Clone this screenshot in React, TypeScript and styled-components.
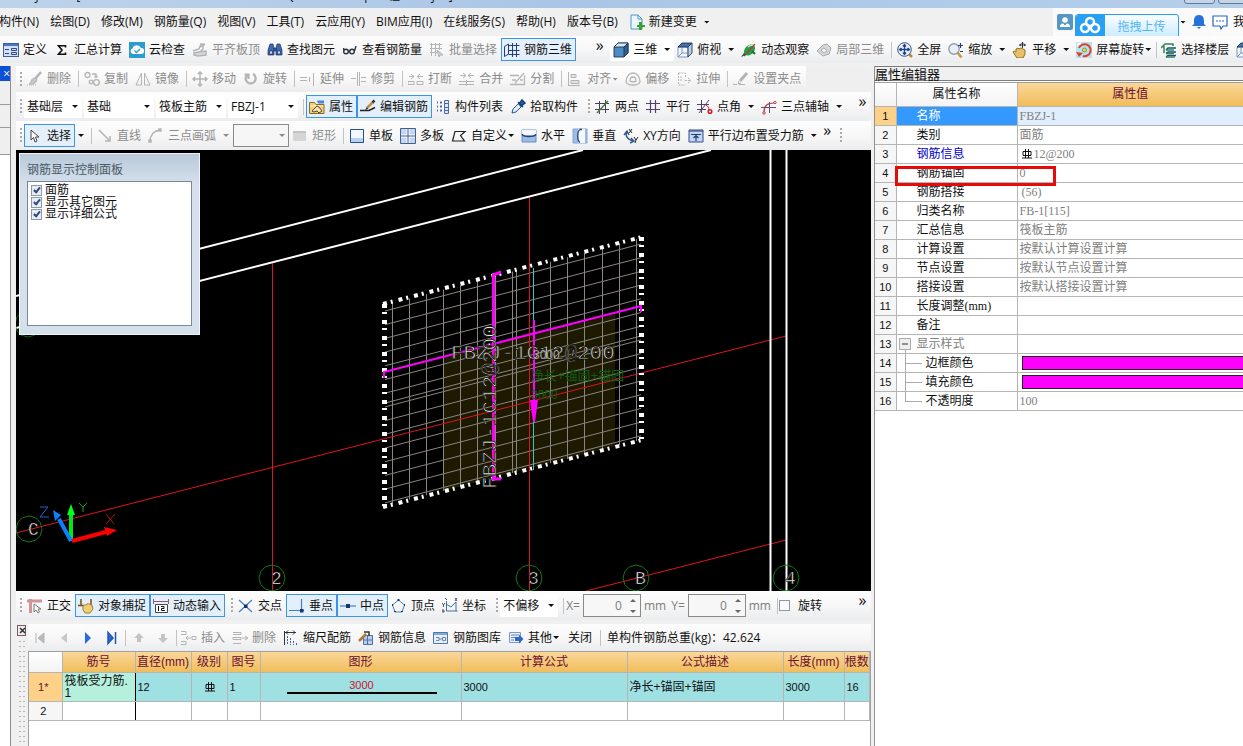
import React from "react";
import styled, { createGlobalStyle } from "styled-components";

const Global = createGlobalStyle`
  *, *::before, *::after { box-sizing: border-box; }
  html, body { margin: 0; padding: 0; }
  body {
    background: #f0f0f0;
    color: #111;
    font: 12px/16px "Open Sans", "Noto Sans CJK SC", sans-serif;
    overflow: hidden;
  }
  button, input, select { font: inherit; color: inherit; margin: 0; }
`;

/* ---------- icons ---------- */

const ink = "#2b4a86";
const gray = "#b4b4b4";

const icons: Record<string, React.ReactNode> = {
  define: (
    <g>
      <rect x="0.5" y="1.5" width="15" height="13" fill="#d3e0f5" stroke="#3d5f9f" />
      <rect x="1" y="2" width="14" height="2" fill="#4a76c8" />
      <path d="M2 7.500h4M2 11.500h4M8.500 6.500h5v2h-5zM8.500 10.500h5v2h-5z" fill="none" stroke={ink} />
    </g>
  ),
  sum: <path d="M11.500 5.500V3.800H4.500l3.500 4.200-3.500 4.200h7V10.500" fill="none" stroke="#111" strokeWidth="1.600" />,
  cloud: (
    <g>
      <rect width="16" height="16" fill="#2b9bd0" />
      <path d="M4 12a3 3 0 0 1-.4-5.800A4.500 4.500 0 0 1 12 6a3 3 0 0 1 .3 6z" fill="#fff" />
      <path d="M5.500 8.500l2 2 3.500-3.500" fill="none" stroke="#2b9bd0" strokeWidth="1.300" />
    </g>
  ),
  slabTop: (
    <g fill="none" stroke={gray} strokeWidth="1.500">
      <path d="M1 9l6-2 2-5h2v5l-3 3" />
      <path d="M2 11l5-1 7-1v4l-8 1-4-1z" fill="#d8d8d8" />
      <path d="M8 5l5-3" />
    </g>
  ),
  find: (
    <g fill="#3f66b0" stroke="#1d3566" strokeWidth=".7">
      <path d="M3 2h3l1 4v7H1V8zM13 2h-3L9 6v7h6V8z" />
      <path d="M7 6h2v3H7z" />
      <path d="M2.500 9h3v3h-3zM10.500 9h3v3h-3z" fill="#c9dcf7" />
    </g>
  ),
  glasses: (
    <g fill="none" stroke="#2c3340" strokeWidth="1.400">
      <circle cx="4" cy="9.500" r="2.300" />
      <circle cx="10" cy="9.500" r="2.300" />
      <path d="M6.500 9h1M2 8.500L1.500 6M12.500 9L14 4" />
    </g>
  ),
  batch: (
    <g fill="none" stroke={gray}>
      <path d="M1 2.500h12M1 6.500h12M1 10.500h7M2.500 1v13M6.500 1v13M10.500 1v7" />
      <path d="M8 8l6 5-3 0-1 2z" fill="#ccc" />
    </g>
  ),
  rebar3d: (
    <g fill="none" stroke="#24406f">
      <path d="M.5 14.500V4.500l4-2.500v10zM4.500 3.500h11M4.500 8.500h11M4.500 12.500h11M8.500 1v14M12.500 1v14" />
    </g>
  ),
  cube: (
    <g stroke="#1f3350" strokeWidth=".9">
      <path d="M1 5l4-4h10v10l-4 4H1z" fill="#4e8cc4" />
      <path d="M1 5l4-4h10l-4 4z" fill="#d4e8f8" />
      <path d="M11 5l4-4v10l-4 4z" fill="#2f618f" />
    </g>
  ),
  topView: (
    <g stroke="#1f3350" strokeWidth=".9">
      <path d="M1 5h10v10H1z" fill="#f2f7fd" stroke="#6b8fc0" />
      <path d="M1 5l4-4h10l-4 4z" fill="#3f71ad" />
      <path d="M11 5l4-4v10l-4 4z" fill="#b9d0ea" />
      <path d="M5 5v6h6M5 11l-4 4" fill="none" stroke="#6b8fc0" />
    </g>
  ),
  orbit: (
    <g>
      <ellipse cx="8.500" cy="8" rx="6.500" ry="4.500" transform="rotate(-45 8.500 8)" fill="#23a04a" />
      <path d="M7 5c2-2 4-2 5-1" stroke="#b7efc5" fill="none" strokeWidth="1.500" />
      <path d="M3 14L14 2" stroke="#c03a30" strokeWidth="1.200" />
      <path d="M0 15l3-4 2 2z" fill="#2a5d3b" />
      <path d="M11 9l3 3" stroke="#1b6b32" strokeWidth="2" />
    </g>
  ),
  part3d: (
    <g fill="#d6d6d6" stroke="#aaa">
      <path d="M1 9l6-6 4-1 4 4-2 6-6 2z" />
      <path d="M5 8l3-2 3 3-3 2z" fill="#f4f4f4" />
    </g>
  ),
  fit: (
    <g>
      <path d="M12 12l3 3" stroke="#b68a3a" strokeWidth="2.500" />
      <circle cx="7.500" cy="7.500" r="6.800" fill="#e8f1fb" stroke="#3a5788" />
      <path d="M7.500 3v9M3 7.500h9M6 4.500l1.500-2 1.500 2M6 10.500l1.500 2 1.500-2M4.500 6l-2 1.500 2 1.500M10.500 6l2 1.500-2 1.500" fill="none" stroke="#1d4485" strokeWidth="1.300" />
    </g>
  ),
  zoom: (
    <g>
      <path d="M9.500 10.500l4 5" stroke="#c79a3d" strokeWidth="2.500" />
      <circle cx="6" cy="7" r="5.200" fill="#e6f0fa" stroke="#8f9aab" strokeWidth="1.400" />
      <path d="M12.500 1v5M10 3.500h5M12 9.500h3" stroke="#24406f" strokeWidth="1.200" />
    </g>
  ),
  pan: (
    <g>
      <path d="M1 10c1-2 2 0 3 0V7l2-1 1 1 2-1 2 1 2 1v4l-2 4H5z" fill="#e8c06a" stroke="#946d23" />
      <path d="M10.500 0v6M7.500 3h6M9.500 1.500l1-1.200 1 1.200M9 2L7.500 3 9 4M12 2l1.500 1L12 4" fill="none" stroke="#333" />
    </g>
  ),
  rotateView: (
    <g>
      <path d="M0 0h16v16H0z" fill="#b9e1ee" />
      <path d="M3 6a6 6 0 1 1 4 8" fill="none" stroke="#e0402f" strokeWidth="2" />
      <path d="M0 10l3 5 4-4z" fill="#e0402f" />
      <circle cx="8.500" cy="8" r="2" fill="#ead86d" stroke="#6d9d43" />
      <path d="M1 3l4-2" stroke="#fff" strokeWidth="2" />
    </g>
  ),
  floors: (
    <g fill="none" stroke="#1e4c83" strokeWidth="1.500">
      <path d="M5 8l2-2h8M5 11.500l2-1.500h8M5 15l2-1.500h8" />
      <path d="M5 8h8M5 11.500h8M5 15h9" stroke="#2f8452" />
      <path d="M0 6l4-4h8v2M3 4v7" stroke="#2f8452" />
    </g>
  ),
  brush: (
    <g fill="none" stroke={gray}>
      <path d="M14 1L8 8" strokeWidth="2.500" />
      <path d="M8 7l2 2c-1 3-4 5-8 4 2-1 2-2 2-3 1-2 2-3 4-3z" fill="#c6c6c6" />
      <path d="M0 14h10" strokeDasharray="1 1" />
    </g>
  ),
  copy: (
    <g fill="none" stroke={gray} strokeWidth="1.300">
      <circle cx="3.500" cy="4" r="2.500" />
      <circle cx="7" cy="11" r="1.800" />
      <circle cx="12.500" cy="11.500" r="2.800" />
      <path d="M8 3h4v3M10.500 5l1.500 1.500L13.500 5" />
    </g>
  ),
  mirror: <path d="M6.500 2v12H1zM9.500 2v12H15z" fill="none" stroke={gray} />,
  move: (
    <path d="M8 1v14M1 8h14M6 3l2-2 2 2M6 13l2 2 2-2M3 6L1 8l2 2M13 6l2 2-2 2" fill="none" stroke={gray} strokeWidth="1.500" />
  ),
  rotate: <path d="M4 4a5 5 0 1 0 6-1M1.500 3.500H5.500V8" fill="none" stroke={gray} strokeWidth="2.200" />,
  extend: <path d="M0 6.500h7M0 9.500h7M9.500 6v5M13.500 2v13" fill="none" stroke={gray} strokeDasharray="none" />,
  trim: <path d="M0 7.500h5M10 6.500h5M6.500 1v14M8.500 1v14M10 10.500h5" fill="none" stroke={gray} />,
  split: <path d="M1 5.500h5M9 5.500h6M3 3l3 2.500L3 8M12 3L9 5.500 12 8M0 10.500h6v3H0zM9 10.500h6v3H9z" fill="none" stroke={gray} />,
  merge: <path d="M1 4.500h5M9 4.500h6M4 2l3 2.500L4 7M12 2L9 4.500 12 7M0 10.500h15M0 13.500h15M7.500 9v6" fill="none" stroke={gray} />,
  cut: <path d="M0 4.500h9M0 13.500h14.500v-9M14 2L5 12M2 9h4M10 9h3" fill="none" stroke={gray} strokeWidth="1.300" />,
  align: <path d="M1.500 1v14M1 14.500h12M4 3.500h5v3H4zM4 9.500h8v3H4z" fill="#e3e3e3" stroke={gray} />,
  offset: (
    <g fill="none" stroke={gray} strokeWidth="1.300">
      <path d="M1 11c0-5 3-9 7-9s7 4 7 9c-2 4-12 4-14 0z" />
      <path d="M5 10c0-3 1-4 3-4s3 1 3 4c-1 1-5 1-6 0z" />
    </g>
  ),
  stretch: <path d="M2.500 2h7v5M2.500 2v12h7M5 5v6M9 9.500h6M12 7l3 2.500-3 2.500" fill="none" stroke={gray} strokeDasharray="2 1" />,
  grip: (
    <g fill="none" stroke={gray}>
      <path d="M14 2L7 10" strokeWidth="3" />
      <path d="M0 13.500h4M6 13.500h6M6 10l-1 3 3-1" />
    </g>
  ),
  props: (
    <g>
      <path d="M.5 3.500h5l1.500 2h8v9H.5z" fill="#f3cf78" stroke="#8a6a28" />
      <path d="M1 7h13" stroke="#fff1c8" />
      <path d="M3 12l5-5 2 1 3 4-3 2-2-2-3 1z" fill="#f8e2a4" stroke="#4a4a4a" />
      <path d="M8 1.500h7v3H9z" fill="#4a88cf" />
    </g>
  ),
  editRebar: (
    <g fill="none">
      <path d="M0 11.500h9l6-3" stroke="#222" strokeWidth="1.500" />
      <path d="M13 3L7 9" stroke="#c78a45" strokeWidth="2.500" />
      <path d="M14.500 1.500l-2 2" stroke="#333" strokeWidth="2.500" />
      <path d="M7 8l-2 3 3-1" fill="#222" />
    </g>
  ),
  list: (
    <g fill="none" stroke="#4d6aa5">
      <path d="M9.500 1.500h4v13h-4zM10 4.500h3M10 8.500h3M10 11.500h3" fill="#dbe6f6" />
      <path d="M2 3.500h1M2 7.500h1M2 11.500h1M5 3.500h2M5 7.500h2M5 11.500h2" strokeWidth="2" />
    </g>
  ),
  picker: (
    <g>
      <path d="M2 14l1-4 6-6 3 3-6 6z" fill="#d9ecfb" stroke="#31578e" />
      <path d="M8 3l5 5M9 5l3-4 3 3-4 3z" fill="#1f65b8" stroke="#1b3e75" strokeWidth="1.500" />
    </g>
  ),
  twoPoint: (
    <g fill="none" stroke="#4b3c63">
      <path d="M0 4.500h14M0 10.500h14M4.500 2v13M10.500 1v13" />
      <path d="M2 14L13 2" stroke="#4c7a2f" strokeWidth="1.500" />
    </g>
  ),
  parallel: (
    <path d="M0 4.500h14M0 10.500h14M4.500 1v13M9.500 1v13" fill="none" stroke="#54406e" strokeWidth="1.200" />
  ),
  pointAngle: (
    <g fill="none" stroke="#54406e">
      <path d="M0 5.500h12M0 10.500h9M4.500 1v13M2 14L12 1" />
      <path d="M9 6c2 1 3 3 3 5" stroke="#d02020" />
      <circle cx="13" cy="12.500" r="1.800" stroke="#d02020" strokeWidth="1.500" />
    </g>
  ),
  threeAxis: (
    <g fill="none" stroke="#c03a48">
      <path d="M3 13c0-6 3-9 10-9" strokeWidth="1.200" />
      <path d="M0 8.500h15M8.500 3v11" stroke="#57506e" />
      <circle cx="14" cy="3.500" r="1.200" />
      <circle cx="3" cy="14" r="1.200" />
    </g>
  ),
  cursor: <path d="M4 2v10l2.500-2.500L8 14l2-1-1.500-4H12z" fill="#fff" stroke="#444" />,
  line: <path d="M2 2l10 10M13 8v5H8" fill="none" stroke={gray} strokeWidth="1.500" />,
  arc: <path d="M2 14C2 7 5 3 12 2M1 12h2v2H1zM11 1h2v2h-2z" fill="none" stroke={gray} strokeWidth="1.400" />,
  rect: (
    <g>
      <path d="M1 3h13v10H1z" fill="#d5d5d5" />
      <path d="M1 3h13v2H1z" fill="#c4c4c4" />
    </g>
  ),
  single: (
    <g>
      <path d="M1.500 1.500h13v13h-13z" fill="#f3f8ff" stroke="#284c91" />
      <path d="M2 10h12v4H2z" fill="#b8d2f4" />
    </g>
  ),
  multi: (
    <g>
      <path d="M.5.5h15v15H.5z" fill="#c3d6f0" stroke="#41608f" />
      <path d="M8 1v14M1 8h14" stroke="#fff" strokeWidth="3" />
      <path d="M8 1v14M1 8h14" stroke="#41608f" />
    </g>
  ),
  custom: <path d="M4 3.500h10L9.500 7.500l4 5.500H1.500z" fill="none" stroke="#222" strokeWidth="1.200" />,
  horizontal: (
    <g>
      <path d="M1 2h14v12H1z" fill="#9dbbe5" stroke="#6c8bc0" />
      <path d="M1 2h14v5H1z" fill="#f4f9ff" />
      <path d="M1.500 6v1c2 2 11 2 13 0V6" fill="none" stroke="#24406f" strokeWidth="1.300" />
    </g>
  ),
  vertical: (
    <g>
      <path d="M1 1h14v14H1z" fill="#9dbbe5" stroke="#8aa6d0" />
      <path d="M6 1h7v14H6z" fill="#f4f9ff" />
      <path d="M10 1.500H8C5 3 5 13 8 14.500" fill="none" stroke="#24406f" strokeWidth="1.300" />
    </g>
  ),
  xy: (
    <g fill="none" stroke="#32578f" strokeWidth="1.400">
      <path d="M4 4c-2 4 0 7 6 9M1 7l3-4 2 4M8 10l3 3-4 2" />
      <path d="M6 1l3 4M9 1L6 5M11 9l2 3 2-3M13 12l-1 3" stroke="#222" strokeWidth="1" />
    </g>
  ),
  edgeForce: (
    <g>
      <path d="M1 2h14v12H1z" fill="#c2d6f2" stroke="#2e4f88" />
      <path d="M1 3h14M3 6.500h10M8 7v6M5.500 10L8 7.500l2.500 2.500" fill="none" stroke="#24406f" strokeWidth="1.200" />
    </g>
  ),
  ortho: (
    <g>
      <path d="M0 3h15M3.500 1v14" stroke="#d19499" strokeWidth="3" />
      <path d="M7 6v8l2-2 2 3 1.500-1-1.500-3h3z" fill="#fff" stroke="#777" />
    </g>
  ),
  snap: (
    <g>
      <path d="M0 7.500h6M3 1v7M13 1v6" stroke="#7a4c22" strokeWidth="1.500" />
      <path d="M5 8c2-2 3 0 4-2 2-1 3 1 5 1l1 4-3 4H7l-2-3z" fill="#efcf72" stroke="#a5812c" />
    </g>
  ),
  dynInput: (
    <g fill="none" stroke="#444">
      <path d="M.5 1v5M15.500 1v5M1 3.500h14" stroke="#99586a" />
      <path d="M2.500 6.500h12v8h-12z" fill="#fff" />
      <path d="M5.500 8v5M8 8.500h3v2H8.500v2H12" stroke="#111" />
    </g>
  ),
  cross: (
    <g>
      <path d="M1 2l13 12M14 2L1 14" stroke="#477ec0" strokeWidth="1.200" />
      <path d="M6 6.500h3.500V10H6z" fill="#17366f" />
    </g>
  ),
  perp: (
    <g>
      <path d="M0 12.500h15M12.500 1v12" stroke="#477ec0" strokeWidth="1.200" />
      <path d="M11 11h3.500v3.500H11z" fill="#17366f" />
    </g>
  ),
  mid: (
    <g>
      <path d="M0 8h16" stroke="#477ec0" strokeWidth="1.200" />
      <path d="M6 6h4v4H6z" fill="#17366f" />
    </g>
  ),
  vertex: (
    <g>
      <path d="M7.500 2l6 5-2.500 7H4L1.500 7z" fill="none" stroke="#477ec0" />
      <path d="M6.500 1h2v2h-2zM1 6h1v2H1zM13 6h1v2h-1zM3 13h2v1H3zM10 13h2v1h-2z" fill="#17366f" />
    </g>
  ),
  coord: (
    <g fill="none" stroke="#3f6ca8">
      <path d="M4.500 3v10h11M4 6l5 3 5-5v9" />
      <path d="M0 5l1.500 2L3 5M1.500 7v2M3 0l2 2M13 0l2 3M15 0l-2 3M0 12h2v2H0z" stroke="#555" />
    </g>
  ),
  first: <path d="M4 3v10M12 3v10L6 8z" fill="#bbb" stroke={gray} />,
  prev: <path d="M11 3v10L5 8z" fill="#c8c8c8" />,
  next: <path d="M5 2v12l6-6z" fill="#2a6bdb" />,
  last: <path d="M4 2.500v11L9 8zM11.500 2v12" fill="#2a6bdb" stroke="#1f56b8" strokeWidth="1.500" />,
  up: <path d="M8 3l5 5h-3v4H6V8H3z" fill="#c4c4c4" />,
  down: <path d="M8 13l5-5h-3V4H6v4H3z" fill="#c4c4c4" />,
  insert: <path d="M0 1.500h5v3H0M0 11.500h5v3H0M11 6.500h4v3h-4zM10 8H5M7 6L5 8l2 2" fill="none" stroke={gray} />,
  remove: <path d="M1 2.500h8v2H1M1 7.500h8v2H1zM1 13.500h8M10 8h6M13 6l3 2-3 2" fill="none" stroke={gray} />,
  scale: (
    <g fill="none" stroke="#333">
      <path d="M1.500 1v14M2 2.500h11M5 .5l-2 2 2 2M10 .5l2 2-2 2" />
      <path d="M4.500 6v9M7.500 8v7M10.500 11v4M13.500 13v2" stroke="#3765a8" strokeDasharray="2 1" />
    </g>
  ),
  info: (
    <g>
      <path d="M5.500 5.500h9v9h-9z" fill="#b9cff0" stroke="#4e71ac" />
      <path d="M9.500 6v9M5 10h10" stroke="#4e71ac" />
      <path d="M1 11l7-7" stroke="#b87433" strokeWidth="2.500" />
      <path d="M6 2h5v4" fill="none" stroke="#333" strokeWidth="1.500" />
    </g>
  ),
  library: (
    <g>
      <path d="M.5 2.500h14v11H.5z" fill="#e7effa" stroke="#4e77b5" />
      <path d="M1 3h13v2H1z" fill="#82a7db" />
      <path d="M3 7.500h3v3H3M9.500 7.500h3v3h-3zM6 9h3" fill="none" stroke="#7186ab" />
    </g>
  ),
  other: (
    <g>
      <path d="M1.500 2.500h11v10h-11z" fill="#e4edf9" stroke="#7c9ac6" />
      <path d="M3 5h8M3 7.500h4M3 10h3" stroke="#6c87b5" />
      <path d="M7 7h4V4.500L15.500 9 11 13.500V11H7z" fill="#2d67c7" />
    </g>
  ),
  newDoc: (
    <g>
      <path d="M2 1h7l4 4v10H2z" fill="#eaf5fc" stroke="#4a9bc9" />
      <path d="M9 1v4h4" fill="none" stroke="#4a9bc9" />
      <path d="M10 8h3v3h3v2h-3v3h-3v-3H8v-2h2z" fill="#3aa32b" />
    </g>
  ),
  user: (
    <g>
      <rect width="16" height="16" rx="2" fill="#5596c4" />
      <circle cx="8" cy="6" r="2.800" fill="#fff" />
      <path d="M3 13c0-3 2-3.500 3-3.500l2 2 2-2c1 0 3 .5 3 3.500z" fill="#fff" />
    </g>
  ),
  bell: <path d="M8 1c4 0 5 3 5 6v3l2 2H1l2-2V7c0-3 1-6 5-6zM6 13h4l-2 2z" fill="#2572d8" />,
  chat: (
    <g>
      <path d="M1 2h14v10h-4l-2 3-1-3H1z" fill="#fff" stroke="#2667b8" strokeWidth="1.200" />
      <path d="M4 7h2M7 7h2M10 7h2" stroke="#2667b8" />
    </g>
  ),
};

const Svg = styled.svg`
  flex: none;
  display: block;
`;

const Icon = ({ name }: { name: string }) => (
  <Svg width="16" height="16" viewBox="0 0 16 16" aria-hidden="true">
    {icons[name]}
  </Svg>
);

const Caret = styled.i<{ $tight?: boolean }>`
  flex: none;
  width: 6px;
  height: 3px;
  margin-left: ${(p) => (p.$tight ? "-3px" : "3px")};
  background: currentColor;
  clip-path: polygon(0 0, 100% 0, 50% 100%);
`;

const RebarMark = () => (
  <Svg width="10" height="10" viewBox="0 0 10 10" role="img" aria-label="HRB400">
    <path d="M1 2.500h8v4H1zM3.500 0v9M6.500 0v9M0 9h10" fill="none" stroke="#111" />
  </Svg>
);

/* ---------- frame ---------- */

const Page = styled.div`
  height: 100vh;
  display: flex;
  flex-direction: column;
  overflow: hidden;
`;

const TitleBar = styled.header`
  flex: none;
  height: 8px;
  display: flex;
  justify-content: space-between;
  align-items: flex-end;
  overflow: hidden;
  padding: 0 0 4px 18px;
  background: linear-gradient(90deg, #bdd3ea, #a9c6e6 45%, #b5cfea);
  white-space: nowrap;
`;

const WindowButtons = styled.div`
  display: flex;
  gap: 3px;
  margin-right: -6px;
`;

const WindowButton = styled.button`
  width: 31px;
  height: 18px;
  padding: 0;
  border: 1px solid #66788f;
  border-radius: 0 0 3px 3px;
  background: #c3d5e9;
`;

const MenuBar = styled.nav`
  flex: none;
  height: 28px;
  display: flex;
  align-items: center;
  gap: 1px;
  overflow: hidden;
  background: #f0f0f0;
`;

const MenuItem = styled.button`
  flex: none;
  display: flex;
  align-items: center;
  gap: 4px;
  height: 24px;
  padding: 0 5px;
  border: 0;
  background: none;
  white-space: nowrap;
  &:first-child { margin-left: -6px; }
`;

const Account = styled.div`
  position: relative;
  flex: none;
  display: flex;
  align-items: center;
  gap: 6px;
  width: 190px;
  height: 28px;
  margin-left: auto;
  padding-left: 4px;
  background: #fafafa;
  white-space: nowrap;
`;

const AccountTools = styled.div`
  flex: none;
  display: flex;
  align-items: center;
  gap: 5px;
  margin-left: 98px;
`;

const UploadTag = styled.button`
  position: absolute;
  z-index: 2;
  left: 22px;
  top: 6px;
  display: flex;
  align-items: center;
  width: 104px;
  height: 25px;
  padding: 0;
  border: 1px solid #2aa0f0;
  border-radius: 3px;
  overflow: hidden;
  background: linear-gradient(#fafdff, #c9ebff);
  color: #55b4f4;
  span { flex: 1; }
`;

const Bar = styled.div<{ $h: number }>`
  flex: none;
  display: flex;
  align-items: center;
  height: ${(p) => p.$h}px;
  overflow: hidden;
  background: linear-gradient(#fdfdfd, #f7f7f7 50%, #ebecee);
  white-space: nowrap;
`;

const Strip = styled.div`
  flex: none;
  display: flex;
  align-items: center;
  height: 100%;
  padding-right: 1px;
  background: linear-gradient(#fff, #f8f8f8 50%, #ececee);
`;

const EditBar = styled(Bar)`
  background: #efefef;
`;

const ToolBtn = styled.button<{ $on?: boolean; $white?: boolean }>`
  flex: none;
  display: flex;
  align-items: center;
  gap: 4px;
  height: 23px;
  padding: 0 3px 0 2px;
  border: 1px solid ${(p) => (p.$on ? "#3c93e8" : "transparent")};
  background: ${(p) => (p.$on ? "#e3effb" : p.$white ? "#fff" : "none")};
  color: #111;
  white-space: nowrap;
  &:disabled { color: #8c8c8c; }
`;

const Sep = styled.i`
  flex: none;
  width: 1px;
  height: 16px;
  margin: 0 2px 0 3px;
  background: #c3c3c3;
`;

const NavSep = styled(Sep)`
  margin: 0 1px;
`;

const Grip = styled.i<{ $mid?: boolean }>`
  flex: none;
  width: 8px;
  height: 17px;
  margin-left: ${(p) => (p.$mid ? "2px" : "0")};
  background: radial-gradient(circle, #aaa 1px, transparent 1px) 3px 0 / 4px 4px repeat-y;
`;

const More = styled.button`
  flex: none;
  align-self: flex-start;
  width: 13px;
  height: 18px;
  padding: 0;
  border: 0;
  background: none;
  color: #111;
  font-size: 16px;
  line-height: 12px;
`;

const MainMore = styled(More)`
  margin: 0 4px 0 17px;
`;

const EndMore = styled(More)`
  margin-left: auto;
  margin-right: 2px;
`;

const Drop = styled.div<{ $w: number; $box?: boolean }>`
  position: relative;
  flex: none;
  width: ${(p) => p.$w}px;
  height: 23px;
  margin-right: ${(p) => (p.$box ? "0" : "2px")};
  border: 1px solid ${(p) => (p.$box ? "#8a8a8a" : "#fff")};
  background: ${(p) => (p.$box ? "#f6f6f6" : "#fff")};
  select {
    appearance: none;
    width: 100%;
    height: 100%;
    padding: 0 12px 0 2px;
    border: 0;
    background: none;
    opacity: 1;
  }
  i {
    position: absolute;
    right: 3px;
    top: 9px;
    color: ${(p) => (p.$box ? "#888" : "#111")};
  }
`;

const CaretBtn = styled.button`
  flex: none;
  width: 13px;
  height: 23px;
  display: flex;
  align-items: center;
  padding: 0;
  border: 0;
  background: none;
`;

type ToolProps = {
  icon?: string;
  label: string;
  on?: boolean;
  off?: boolean;
  white?: boolean;
  caret?: "wide" | "tight";
};

const Tool = ({ icon, label, on, off, white, caret }: ToolProps) => (
  <ToolBtn $on={on} $white={white} disabled={off} aria-pressed={on}>
    {icon && <Icon name={icon} />}
    <span>{label}</span>
    {caret && <Caret $tight={caret === "tight"} />}
  </ToolBtn>
);

const Dropdown = ({ w, label, value, box }: { w: number; label: string; value: string; box?: boolean }) => (
  <Drop $w={w} $box={box}>
    <select aria-label={label} disabled={box} defaultValue={value}>
      <option>{value}</option>
    </select>
    <Caret />
  </Drop>
);

const Body = styled.div`
  flex: 1;
  min-height: 0;
  margin-top: 3px;
  display: grid;
  grid-template-columns: 11px 5px minmax(0, 1fr) 3px minmax(300px, 369px);
`;

const Dock = styled.aside`
  display: flex;
  flex-direction: column;
  border-right: 1px solid #8f8f8f;
  background: #fff;
`;

const DockClose = styled.button`
  height: 15px;
  padding: 0;
  border: 0;
  background: #0c50d8;
  color: #fff;
  line-height: 15px;
  text-align: right;
`;

const DockTab = styled.div<{ $h: number }>`
  height: ${(p) => p.$h}px;
  border-bottom: 1px solid #9a9a9a;
  background: #efefef;
`;

const Center = styled.main`
  display: flex;
  flex-direction: column;
  min-width: 0;
`;

/* ---------- canvas ---------- */

const Viewport = styled.section`
  position: relative;
  flex: 1;
  min-height: 0;
  overflow: hidden;
  background: #000;
`;

const Scene = styled.svg`
  display: block;
  width: 100%;
  height: 100%;
`;

const ControlPanel = styled.div`
  position: absolute;
  left: 3px;
  top: 3px;
  width: 181px;
  height: 182px;
  display: flex;
  flex-direction: column;
  padding: 8px 7px;
  border: 1px solid #eef3f8;
  background: linear-gradient(#b9c9d9, #d4e0ec 30px);
`;

const PanelTitle = styled.h2`
  margin: 0;
  height: 19px;
  font-size: 12px;
  font-weight: 400;
  line-height: 16px;
  color: #4b5863;
`;

const CheckList = styled.div`
  flex: 1;
  padding: 2px 3px;
  border: 1px solid #7c8894;
  background: #fff;
`;

const Check = styled.label`
  display: flex;
  align-items: center;
  gap: 3px;
  height: 12px;
  line-height: 12px;
`;

const TickBox = styled.input`
  appearance: none;
  flex: none;
  width: 11px;
  height: 11px;
  border: 1px solid #8e9aab;
  background: #e8edf5;
  &:checked::after {
    content: "";
    display: block;
    width: 4px;
    height: 7px;
    margin: 0 auto;
    border: solid #2f4a80;
    border-width: 0 2px 2px 0;
    transform: rotate(40deg);
  }
`;

const verticals = [392, 409, 426, 443, 460, 477, 495, 512, 516, 550, 567, 584, 602, 619, 636];
const slopes = [...Array.from({ length: 15 }, (_, k) => 311 + k * 13.7), 403];
const bubbles: [number, number, string][] = [
  [29, 529, "C"],
  [272, 578, "2"],
  [529, 578, "3"],
  [636, 578, "B"],
  [786, 578, "4"],
];

const ring = (cx: number, cy: number) =>
  Array.from({ length: 12 }, (_, i) => {
    const a = (i * Math.PI) / 6;
    return `${cx + 13 * Math.cos(a)},${cy + 13 * Math.sin(a)}`;
  }).join(" ");

const Drawing = () => (
  <Scene viewBox="16 150 855 441" preserveAspectRatio="xMinYMin slice" role="img" aria-label="钢筋三维">
    <clipPath id="slab">
      <path d="M385 305L641 238V440L385 506z" />
    </clipPath>
    <path d="M443 357L615 314V446L443 491z" fill="#1e1a02" />
    <g clipPath="url(#slab)" stroke="#8a8580" fill="none">
      {verticals.map((x) => (
        <path key={x} d={`M${x + 0.5} 230V510`} />
      ))}
      {slopes.map((y) => (
        <path key={y} d={`M385 ${y}L641 ${y - 67}`} />
      ))}
    </g>
    <g stroke="#e0141c" fill="none">
      <path d="M272.500 262V591" />
      <path d="M529.500 197V591" />
      <path d="M16 533L786 336M586 591L786 540" />
    </g>
    <path d="M16 296L583 150M16 328L711 150M770.500 150V591M786.500 150V591" stroke="#fff" strokeWidth="2" fill="none" />
    <g fill="none" stroke="#fff" strokeWidth="4" strokeDasharray="4 4 2 6">
      <path d="M383 304L642 237" />
      <path d="M384.500 304V507M641.500 237V441" strokeWidth="5" />
      <path d="M383 507L642 440" />
    </g>
    <path d="M533.500 268V470" stroke="#35c9c4" fill="none" />
    <g fill="none" stroke="#ff00ff" strokeWidth="2">
      <path d="M384 378V372L641 306V312" />
      <path d="M501 272L493.500 275V479H501" strokeWidth="3" />
      <path d="M534 320V402" />
    </g>
    <path d="M530 400h8l-3 22h-2z" fill="#ff00ff" />
    <g fontFamily="Liberation Mono, monospace" fontSize="21" fill="#e6e6e6" stroke="#0c0b02" strokeWidth=".8">
      <text x="451" y="359">FBZJ-1C12@200</text>
      <text transform="translate(496 489) rotate(-90)">FBZJ-1C12@200</text>
    </g>
    <g fontFamily="Liberation Sans, Noto Sans CJK SC, sans-serif" fontSize="12">
      <text x="533" y="359" fill="#aaa">3000</text>
      <text x="531" y="380" fill="#0f5c14" fontSize="13">净长+锚固+锚固</text>
      <text x="531" y="399" fill="#0f5c14">3000</text>
    </g>
    <polygon points={ring(28, 324)} fill="none" stroke="#0f6a18" />
    {bubbles.map(([x, y, t]) => (
      <g key={t}>
        <polygon points={ring(x, y)} fill="none" stroke="#117a1b" />
        <text x={x - 1} y={y + 6} fill="#fff" stroke="#000" strokeWidth=".6" fontFamily="Liberation Mono, monospace" fontSize="18">
          {t}
        </text>
      </g>
    ))}
    <path d="M71 541V512" stroke="#00e81a" strokeWidth="4" />
    <path d="M67 515l4-11 4 11z" fill="#00ff1a" />
    <path d="M71 541L59 519" stroke="#0a80ff" strokeWidth="4" />
    <path d="M53 510l8 5-6 6z" fill="#0a80ff" />
    <path d="M72 541L106 532" stroke="#f00" strokeWidth="4" />
    <path d="M104 527l13 3-10 6z" fill="#f00" />
    <g fill="none" strokeWidth="1">
      <path d="M40 507h8l-8 10h9" stroke="#2a63c8" />
      <path d="M79 503l4 4 4-4M83 507v5" stroke="#17a324" />
      <path d="M106 514l8 10M115 514l-9 10" stroke="#b01616" />
    </g>
  </Scene>
);

/* ---------- lower dock ---------- */

const OffsetLabel = styled.label`
  flex: none;
  display: flex;
  align-items: center;
  gap: 3px;
  margin-right: 5px;
  color: #7d7d7d;
`;

const Spin = styled.span`
  display: flex;
  align-items: center;
  width: 58px;
  height: 23px;
  padding-right: 4px;
  border: 1px solid #8a8a8a;
  background: #f7f7f7;
  input {
    flex: 1;
    min-width: 0;
    padding: 0 8px 0 0;
    border: 0;
    background: none;
    text-align: right;
    appearance: textfield;
  }
  input::-webkit-inner-spin-button { appearance: none; }
`;

const SpinField = ({ axis }: { axis: string }) => (
  <OffsetLabel>
    {axis}=
    <Spin>
      <input type="number" defaultValue={0} disabled />
      <Svg width="6" height="16" viewBox="0 0 6 16" aria-hidden="true">
        <path d="M0 4l3-3 3 3zM0 12l3 3 3-3z" fill="#666" />
      </Svg>
    </Spin>
    mm
  </OffsetLabel>
);

const RotateLabel = styled.label`
  flex: none;
  display: flex;
  align-items: center;
  gap: 8px;
`;

const EmptyBox = styled(TickBox)`
  background: #fafafa;
`;

const Lower = styled.section`
  flex: none;
  display: grid;
  grid-template-columns: 12px minmax(0, 1fr);
  height: 126px;
  padding-top: 4px;
`;

const Gutter = styled.div`
  display: flex;
  flex-direction: column;
  gap: 3px;
  padding: 1px 2px 0 1px;
`;

const CloseBtn = styled.button`
  height: 11px;
  padding: 0 0 0 1px;
  border: 1px solid #7a5a62;
  background: #eee;
`;

const Dots = styled.i`
  flex: 1;
  background: radial-gradient(circle, #b8b8b8 1px, transparent 1px) 1px 0 / 4px 5px;
`;

const LowerMain = styled.div`
  display: flex;
  flex-direction: column;
  min-width: 0;
`;

const NavBtn = styled.button`
  flex: none;
  display: flex;
  align-items: center;
  justify-content: center;
  width: 24px;
  height: 23px;
  padding: 0;
  border: 0;
  background: none;
`;

const CloseText = styled(ToolBtn)`
  padding: 0 4px;
`;

const Total = styled.output`
  flex: none;
  padding-left: 4px;
`;

const GridWrap = styled.div`
  flex: 1;
  overflow: hidden;
  border: 1px solid #a0a0a0;
  border-bottom: 0;
  background: #fff;
`;

const Grid = styled.table`
  width: 100%;
  border-collapse: collapse;
  table-layout: fixed;
  font: 12px/12px "Liberation Sans", "Noto Sans CJK SC", sans-serif;
  th, td {
    padding: 0 0 0 2px;
    border-right: 1px solid #b5b5b5;
    border-bottom: 1px solid #b5b5b5;
    font-weight: 400;
    text-align: left;
    overflow: hidden;
    white-space: nowrap;
  }
`;

const HeadCell = styled.th`
  && { text-align: center; padding: 0; }
  height: 20px;
  background: linear-gradient(#fad698, #f1bd5b);
  color: #6b1030;
`;

const Corner = styled.th`
  background: linear-gradient(#fff, #f3f3f3);
`;

const RowHead = styled.th<{ $on?: boolean }>`
  && { text-align: center; padding: 0 4px 0 0; }
  background: ${(p) => (p.$on ? "#fdd288" : "#f6f6f6")};
  color: ${(p) => (p.$on ? "#6b1030" : "#111")};
  font-size: 11px;
`;

const DataRow = styled.tr<{ $h: number; $on?: boolean }>`
  height: ${(p) => p.$h}px;
  background: ${(p) => (p.$on ? "#9fe0e3" : "#fff")};
  td { font-size: 11px; }
`;

const NameCell = styled.td<{ $on?: boolean }>`
  && { white-space: normal; border-right-color: #000; font-size: 12px; }
  background: ${(p) => (p.$on ? "#b4f0dc" : "#fff")};
`;

const TextCell = styled.td`
  && { font-size: 12px; }
`;

const MarkCell = styled.td`
  svg { margin: 0 auto; }
`;

const Shape = styled.div`
  width: 150px;
  margin: 0 auto;
  padding-bottom: 1px;
  border-bottom: 2px solid #000;
  color: #d0102a;
  text-align: center;
`;

/* ---------- property editor ---------- */

const Inspector = styled.aside`
  display: flex;
  flex-direction: column;
  min-width: 0;
  border-left: 1px solid #909090;
  background: #fff;
`;

const InspectorTitle = styled.h2`
  flex: none;
  margin: 0;
  height: 15px;
  border: 1px solid #7d7d7d;
  border-width: 1px 0;
  background: #f0f0f0;
  font: 13px/13px "Noto Sans CJK SC", sans-serif;
`;

const PropWrap = styled.div`
  position: relative;
  margin-top: 1px;
  border-top: 1px solid #a0a0a0;
  overflow: hidden;
`;

const PropTable = styled.table`
  width: 100%;
  border-collapse: collapse;
  table-layout: fixed;
  font: 12px/14px "Liberation Serif", "Noto Sans CJK SC", serif;
  th, td {
    height: 19px;
    padding: 0;
    border-right: 1px solid #b5b5b5;
    border-bottom: 1px solid #b5b5b5;
    font-weight: 400;
    white-space: nowrap;
  }
  th:last-child, td:last-child { border-right: 0; }
`;

const PropHead = styled.th<{ $gold?: boolean }>`
  && { height: 23px; }
  background: ${(p) => (p.$gold ? "linear-gradient(#fad698, #f1bd5b)" : "linear-gradient(#fff, #f3f3f3)")};
  color: ${(p) => (p.$gold ? "#6b1030" : "#111")};
`;

const PropIndex = styled.th<{ $on?: boolean }>`
  background: ${(p) => (p.$on ? "#fdd288" : "#f6f6f6")};
  font-family: "Liberation Sans", sans-serif;
  font-size: 11px;
`;

const PropName = styled.td<{ $on?: boolean; $c?: string }>`
  background: ${(p) => (p.$on ? "#3399ff" : "#fff")};
  color: ${(p) => (p.$on ? "#fff" : p.$c || "#111")};
`;

const NameRow = styled.div<{ $pad?: boolean }>`
  display: flex;
  align-items: center;
  height: 18px;
  padding-left: ${(p) => (p.$pad ? "20px" : "0")};
`;

const PropValue = styled.td<{ $on?: boolean }>`
  background: ${(p) => (p.$on ? "#e0eefe" : "#fff")};
  color: #808080;
`;

const ValueRow = styled.div<{ $inset?: boolean }>`
  display: flex;
  align-items: center;
  gap: 2px;
  padding-left: ${(p) => (p.$inset ? "4px" : "2px")};
`;

const Swatch = styled.div`
  height: 14px;
  margin-left: 4px;
  border: 1px solid #222;
  border-right: 0;
  background: #f0f;
`;

const Highlight = styled.div`
  position: absolute;
  left: 20px;
  top: 83px;
  width: 161px;
  height: 20px;
  border: 3px solid #e60a0a;
`;

type Prop = { name: string; value?: string; kind?: "group" | "child" | "last"; color?: string; swatch?: boolean; mark?: boolean; inset?: boolean };

const props: Prop[] = [
  { name: "名称", value: "FBZJ-1" },
  { name: "类别", value: "面筋" },
  { name: "钢筋信息", value: "12@200", color: "#0000d0", mark: true, inset: true },
  { name: "钢筋锚固", value: "0" },
  { name: "钢筋搭接", value: "(56)", inset: true },
  { name: "归类名称", value: "FB-1[115]" },
  { name: "汇总信息", value: "筏板主筋" },
  { name: "计算设置", value: "按默认计算设置计算" },
  { name: "节点设置", value: "按默认节点设置计算" },
  { name: "搭接设置", value: "按默认搭接设置计算" },
  { name: "长度调整(mm)" },
  { name: "备注" },
  { name: "显示样式", kind: "group", color: "#808080" },
  { name: "边框颜色", kind: "child", swatch: true },
  { name: "填充颜色", kind: "child", swatch: true },
  { name: "不透明度", value: "100", kind: "last" },
];

const Branch = ({ kind }: { kind: "group" | "child" | "last" }) =>
  kind === "group" ? (
    <Svg width="20" height="18" viewBox="0 0 20 18" aria-hidden="true">
      <path d="M2.500 3.500h11v11h-11z" fill="#eee" stroke="#aaa" />
      <path d="M5 9h6" stroke="#333" />
      <path d="M8.500 15v3" stroke="#aaa" />
    </Svg>
  ) : (
    <Svg width="29" height="18" viewBox="0 0 29 18" aria-hidden="true">
      <path d={`M8.500 0V${kind === "last" ? 9.5 : 18}M8 9.500h17`} fill="none" stroke="#aaa" />
    </Svg>
  );

const Inspect = () => (
  <Inspector>
    <InspectorTitle>属性编辑器</InspectorTitle>
    <PropWrap>
      <PropTable>
        <colgroup>
          <col width="21" />
          <col width="121" />
          <col />
        </colgroup>
        <thead>
          <tr>
            <PropHead />
            <PropHead scope="col">属性名称</PropHead>
            <PropHead scope="col" $gold>
              属性值
            </PropHead>
          </tr>
        </thead>
        <tbody>
          {props.map((p, i) => (
            <tr key={p.name}>
              <PropIndex scope="row" $on={i === 0}>
                {i + 1}
              </PropIndex>
              <PropName $on={i === 0} $c={p.color}>
                <NameRow $pad={!p.kind}>
                  {p.kind && <Branch kind={p.kind} />}
                  {p.name}
                </NameRow>
              </PropName>
              <PropValue $on={i === 0}>
                {p.swatch ? (
                  <Swatch />
                ) : (
                  <ValueRow $inset={p.inset}>
                    {p.mark && <RebarMark />}
                    {p.value}
                  </ValueRow>
                )}
              </PropValue>
            </tr>
          ))}
        </tbody>
      </PropTable>
      <Highlight />
    </PropWrap>
  </Inspector>
);

/* ---------- page ---------- */

const menus = ["构件(N)", "绘图(D)", "修改(M)", "钢筋量(Q)", "视图(V)", "工具(T)", "云应用(Y)", "BIM应用(I)", "在线服务(S)", "帮助(H)", "版本号(B)"];
const columns: [string, number?][] = [
  ["筋号", 73],
  ["直径(mm)", 56],
  ["级别", 36],
  ["图号", 33],
  ["图形", 201],
  ["计算公式", 166],
  ["公式描述", 156],
  ["长度(mm)", 61],
  ["根数"],
];
const nav: [string, string, boolean][] = [
  ["first", "第一条", false],
  ["prev", "上一条", false],
  ["next", "下一条", true],
  ["last", "最后一条", true],
];

export default function App() {
  return (
    <Page>
      <Global />
      <TitleBar>
        <span>GGJ2013 - [C:\Users\Administrator.PC-20160629QMHL\Desktop\王程\3.GGJ12]</span>
        <WindowButtons>
          <WindowButton aria-label="最小化" />
          <WindowButton aria-label="还原" />
        </WindowButtons>
      </TitleBar>
      <MenuBar>
        {menus.map((m) => (
          <MenuItem key={m}>{m}</MenuItem>
        ))}
        <MenuItem>
          <Icon name="newDoc" />
          新建变更
          <Caret />
        </MenuItem>
        <Account>
          <Icon name="user" />
          <UploadTag>
            <Svg width="29" height="25" viewBox="0 0 29 25" aria-hidden="true">
              <path d="M0 0h29v25H0z" fill="#28a0f4" />
              <g fill="none" stroke="#fff" strokeWidth="2.500">
                <circle cx="14" cy="8" r="4" />
                <circle cx="9" cy="14" r="4" />
                <circle cx="19" cy="14" r="4" />
              </g>
            </Svg>
            <span>拖拽上传</span>
          </UploadTag>
          <AccountTools>
            <Caret />
            <Icon name="bell" />
            <Icon name="chat" />
            我
          </AccountTools>
        </Account>
      </MenuBar>
      <Bar $h={27}>
        <Tool icon="define" label="定义" />
        <Tool icon="sum" label="汇总计算" />
        <Tool icon="cloud" label="云检查" />
        <Tool icon="slabTop" label="平齐板顶" off />
        <Tool icon="find" label="查找图元" />
        <Tool icon="glasses" label="查看钢筋量" />
        <Tool icon="batch" label="批量选择" off />
        <Tool icon="rebar3d" label="钢筋三维" on />
        <MainMore aria-label="更多">»</MainMore>
        <Tool icon="cube" label="三维" caret="wide" white />
        <Tool icon="topView" label="俯视" caret="wide" />
        <Tool icon="orbit" label="动态观察" />
        <Tool icon="part3d" label="局部三维" off />
        <Sep />
        <Tool icon="fit" label="全屏" />
        <Tool icon="zoom" label="缩放" caret="wide" />
        <Tool icon="pan" label="平移" caret="wide" />
        <Tool icon="rotateView" label="屏幕旋转" caret="tight" />
        <NavSep />
        <Tool icon="floors" label="选择楼层" />
        <Tool icon="topView" label="" />
      </Bar>
      <Body>
        <Dock>
          <DockClose aria-label="关闭">×</DockClose>
          <DockTab $h={24} />
          <DockTab $h={23} />
          <DockTab $h={27} />
        </Dock>
        <span />
        <Center>
          <EditBar $h={26}>
            <Strip>
              <Grip />
              <Tool icon="brush" label="删除" off />
              <Sep />
              <Tool icon="copy" label="复制" off />
              <Tool icon="mirror" label="镜像" off />
              <Sep />
              <Tool icon="move" label="移动" off />
              <Tool icon="rotate" label="旋转" off />
              <Sep />
              <Tool icon="extend" label="延伸" off />
              <Tool icon="trim" label="修剪" off />
              <Sep />
              <Tool icon="split" label="打断" off />
              <Tool icon="merge" label="合并" off />
              <Tool icon="cut" label="分割" off />
              <Sep />
              <Tool icon="align" label="对齐" off caret="tight" />
              <Tool icon="offset" label="偏移" off />
              <Tool icon="stretch" label="拉伸" off />
              <Sep />
              <Tool icon="grip" label="设置夹点" off />
            </Strip>
          </EditBar>
          <Bar $h={29}>
            <Grip />
            <Dropdown w={58} label="楼层" value="基础层" />
            <Dropdown w={70} label="构件类别" value="基础" />
            <Dropdown w={70} label="构件类型" value="筏板主筋" />
            <Dropdown w={70} label="构件" value="FBZJ-1" />
            <Sep />
            <Tool icon="props" label="属性" on />
            <Tool icon="editRebar" label="编辑钢筋" on />
            <Tool icon="list" label="构件列表" />
            <Tool icon="picker" label="拾取构件" />
            <Grip $mid />
            <Tool icon="twoPoint" label="两点" />
            <Tool icon="parallel" label="平行" />
            <Tool icon="pointAngle" label="点角" caret="wide" />
            <Tool icon="threeAxis" label="三点辅轴" caret="wide" />
            <EndMore aria-label="更多">»</EndMore>
          </Bar>
          <Bar $h={29}>
            <Grip />
            <Tool icon="cursor" label="选择" on />
            <CaretBtn aria-label="选择方式">
              <Caret />
            </CaretBtn>
            <Sep />
            <Tool icon="line" label="直线" off />
            <Tool icon="arc" label="三点画弧" off caret="wide" />
            <Dropdown w={56} label="半径" value="" box />
            <Tool icon="rect" label="矩形" off />
            <Sep />
            <Tool icon="single" label="单板" />
            <Tool icon="multi" label="多板" />
            <Tool icon="custom" label="自定义" caret="tight" />
            <Tool icon="horizontal" label="水平" />
            <Tool icon="vertical" label="垂直" />
            <Tool icon="xy" label="XY方向" />
            <Tool icon="edgeForce" label="平行边布置受力筋" caret="wide" />
            <More aria-label="更多">»</More>
            <Grip $mid />
          </Bar>
          <Viewport>
            <Drawing />
            <ControlPanel>
              <PanelTitle>钢筋显示控制面板</PanelTitle>
              <CheckList>
                {["面筋", "显示其它图元", "显示详细公式"].map((t) => (
                  <Check key={t}>
                    <TickBox type="checkbox" defaultChecked />
                    {t}
                  </Check>
                ))}
              </CheckList>
            </ControlPanel>
          </Viewport>
          <Bar $h={29}>
            <Grip />
            <Tool icon="ortho" label="正交" />
            <Tool icon="snap" label="对象捕捉" on />
            <Tool icon="dynInput" label="动态输入" on />
            <Grip $mid />
            <Tool icon="cross" label="交点" />
            <Tool icon="perp" label="垂点" on />
            <Tool icon="mid" label="中点" on />
            <Tool icon="vertex" label="顶点" />
            <Tool icon="coord" label="坐标" />
            <Grip $mid />
            <Dropdown w={58} label="偏移方式" value="不偏移" />
            <Sep />
            <SpinField axis="X" />
            <SpinField axis="Y" />
            <NavSep />
            <RotateLabel>
              <EmptyBox type="checkbox" />
              旋转
            </RotateLabel>
            <EndMore aria-label="更多">»</EndMore>
          </Bar>
          <Lower>
            <Gutter>
              <CloseBtn aria-label="关闭">
                <Svg width="7" height="7" viewBox="0 0 7 7">
                  <path d="M1 1l5 5M6 1L1 6" stroke="#333" strokeWidth="1.500" />
                </Svg>
              </CloseBtn>
              <Dots />
            </Gutter>
            <LowerMain>
              <Bar $h={27}>
                {nav.map(([n, label, enabled]) => (
                  <NavBtn key={n} aria-label={label} disabled={!enabled}>
                    <Icon name={n} />
                  </NavBtn>
                ))}
                <NavSep />
                <NavBtn aria-label="上移" disabled>
                  <Icon name="up" />
                </NavBtn>
                <NavBtn aria-label="下移" disabled>
                  <Icon name="down" />
                </NavBtn>
                <NavSep />
                <Tool icon="insert" label="插入" off />
                <Tool icon="remove" label="删除" off />
                <Tool icon="scale" label="缩尺配筋" />
                <Tool icon="info" label="钢筋信息" />
                <Tool icon="library" label="钢筋图库" />
                <Tool icon="other" label="其他" caret="tight" />
                <CloseText>关闭</CloseText>
                <Sep />
                <Total>单构件钢筋总重(kg)：42.624</Total>
              </Bar>
              <GridWrap>
                <Grid>
                  <colgroup>
                    <col width="33" />
                    {columns.map(([c, w]) => (
                      <col key={c} width={w} />
                    ))}
                  </colgroup>
                  <thead>
                    <tr>
                      <Corner />
                      {columns.map(([c]) => (
                        <HeadCell key={c} scope="col">
                          {c}
                        </HeadCell>
                      ))}
                    </tr>
                  </thead>
                  <tbody>
                    <DataRow $h={29} $on>
                      <RowHead scope="row" $on>
                        1*
                      </RowHead>
                      <NameCell $on>
                        筏板受力筋.
                        <br />1
                      </NameCell>
                      <td>12</td>
                      <MarkCell>
                        <RebarMark />
                      </MarkCell>
                      <td>1</td>
                      <td>
                        <Shape>3000</Shape>
                      </td>
                      <td>3000</td>
                      <TextCell>净长+锚固+锚固</TextCell>
                      <td>3000</td>
                      <td>16</td>
                    </DataRow>
                    <DataRow $h={19}>
                      <RowHead scope="row">2</RowHead>
                      <NameCell />
                      <td />
                      <td />
                      <td />
                      <td />
                      <td />
                      <td />
                      <td />
                      <td />
                    </DataRow>
                  </tbody>
                </Grid>
              </GridWrap>
            </LowerMain>
          </Lower>
        </Center>
        <span />
        <Inspect />
      </Body>
    </Page>
  );
}
